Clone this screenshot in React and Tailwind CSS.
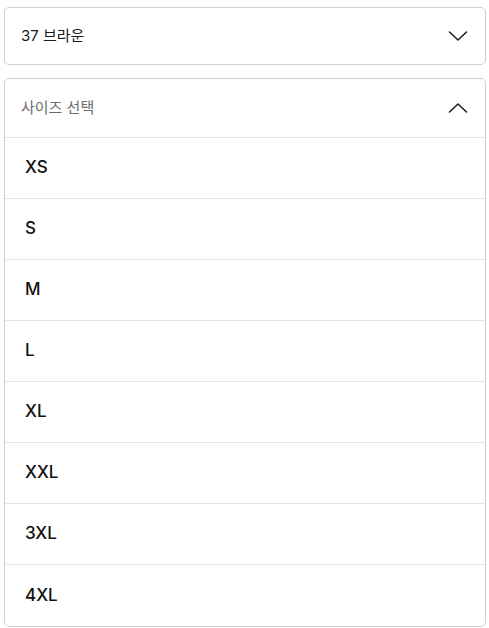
const SIZES = ['XS', 'S', 'M', 'L', 'XL', 'XXL', '3XL', '4XL']

const Chevron = ({ up }) => (
  <svg width="20" height="12" viewBox="0 0 20 12" fill="none" stroke="#1f1f1f" strokeWidth="1.6"
    strokeLinecap="round" strokeLinejoin="round" className="shrink-0">
    {up ? <path d="M1.5 10 L10 2 L18.5 10" /> : <path d="M1.5 2 L10 10 L18.5 2" />}
  </svg>
)

export default function App() {
  return (
    <div className="p-1 pt-[7px] pr-[3px] bg-white" style={{ fontFamily: 'Inter, "Noto Sans CJK KR", sans-serif' }}>
      <button className="w-full h-[58px] flex items-center justify-between pl-4 pr-[17px] border border-[#cfcfcf] rounded-[5px] bg-white">
        <span className="text-[15px] text-[#1a1a1a]">37 브라운</span>
        <Chevron />
      </button>

      <div className="mt-[13px] border border-[#cfcfcf] rounded-[5px] bg-white">
        <div className="h-[59px] flex items-center justify-between pl-4 pr-[17px] border-b border-[#e3e3e3]">
          <span className="text-[15px] text-[#6b6b6b]">사이즈 선택</span>
          <Chevron up />
        </div>
        {SIZES.map((s, i) => (
          <div key={s}
            className={`h-[61px] flex items-center pl-5 ${i < SIZES.length - 1 ? 'border-b border-[#e3e3e3]' : ''}`}>
            <span className="text-[17px] font-medium text-[#111]">{s}</span>
          </div>
        ))}
      </div>
    </div>
  )
}
